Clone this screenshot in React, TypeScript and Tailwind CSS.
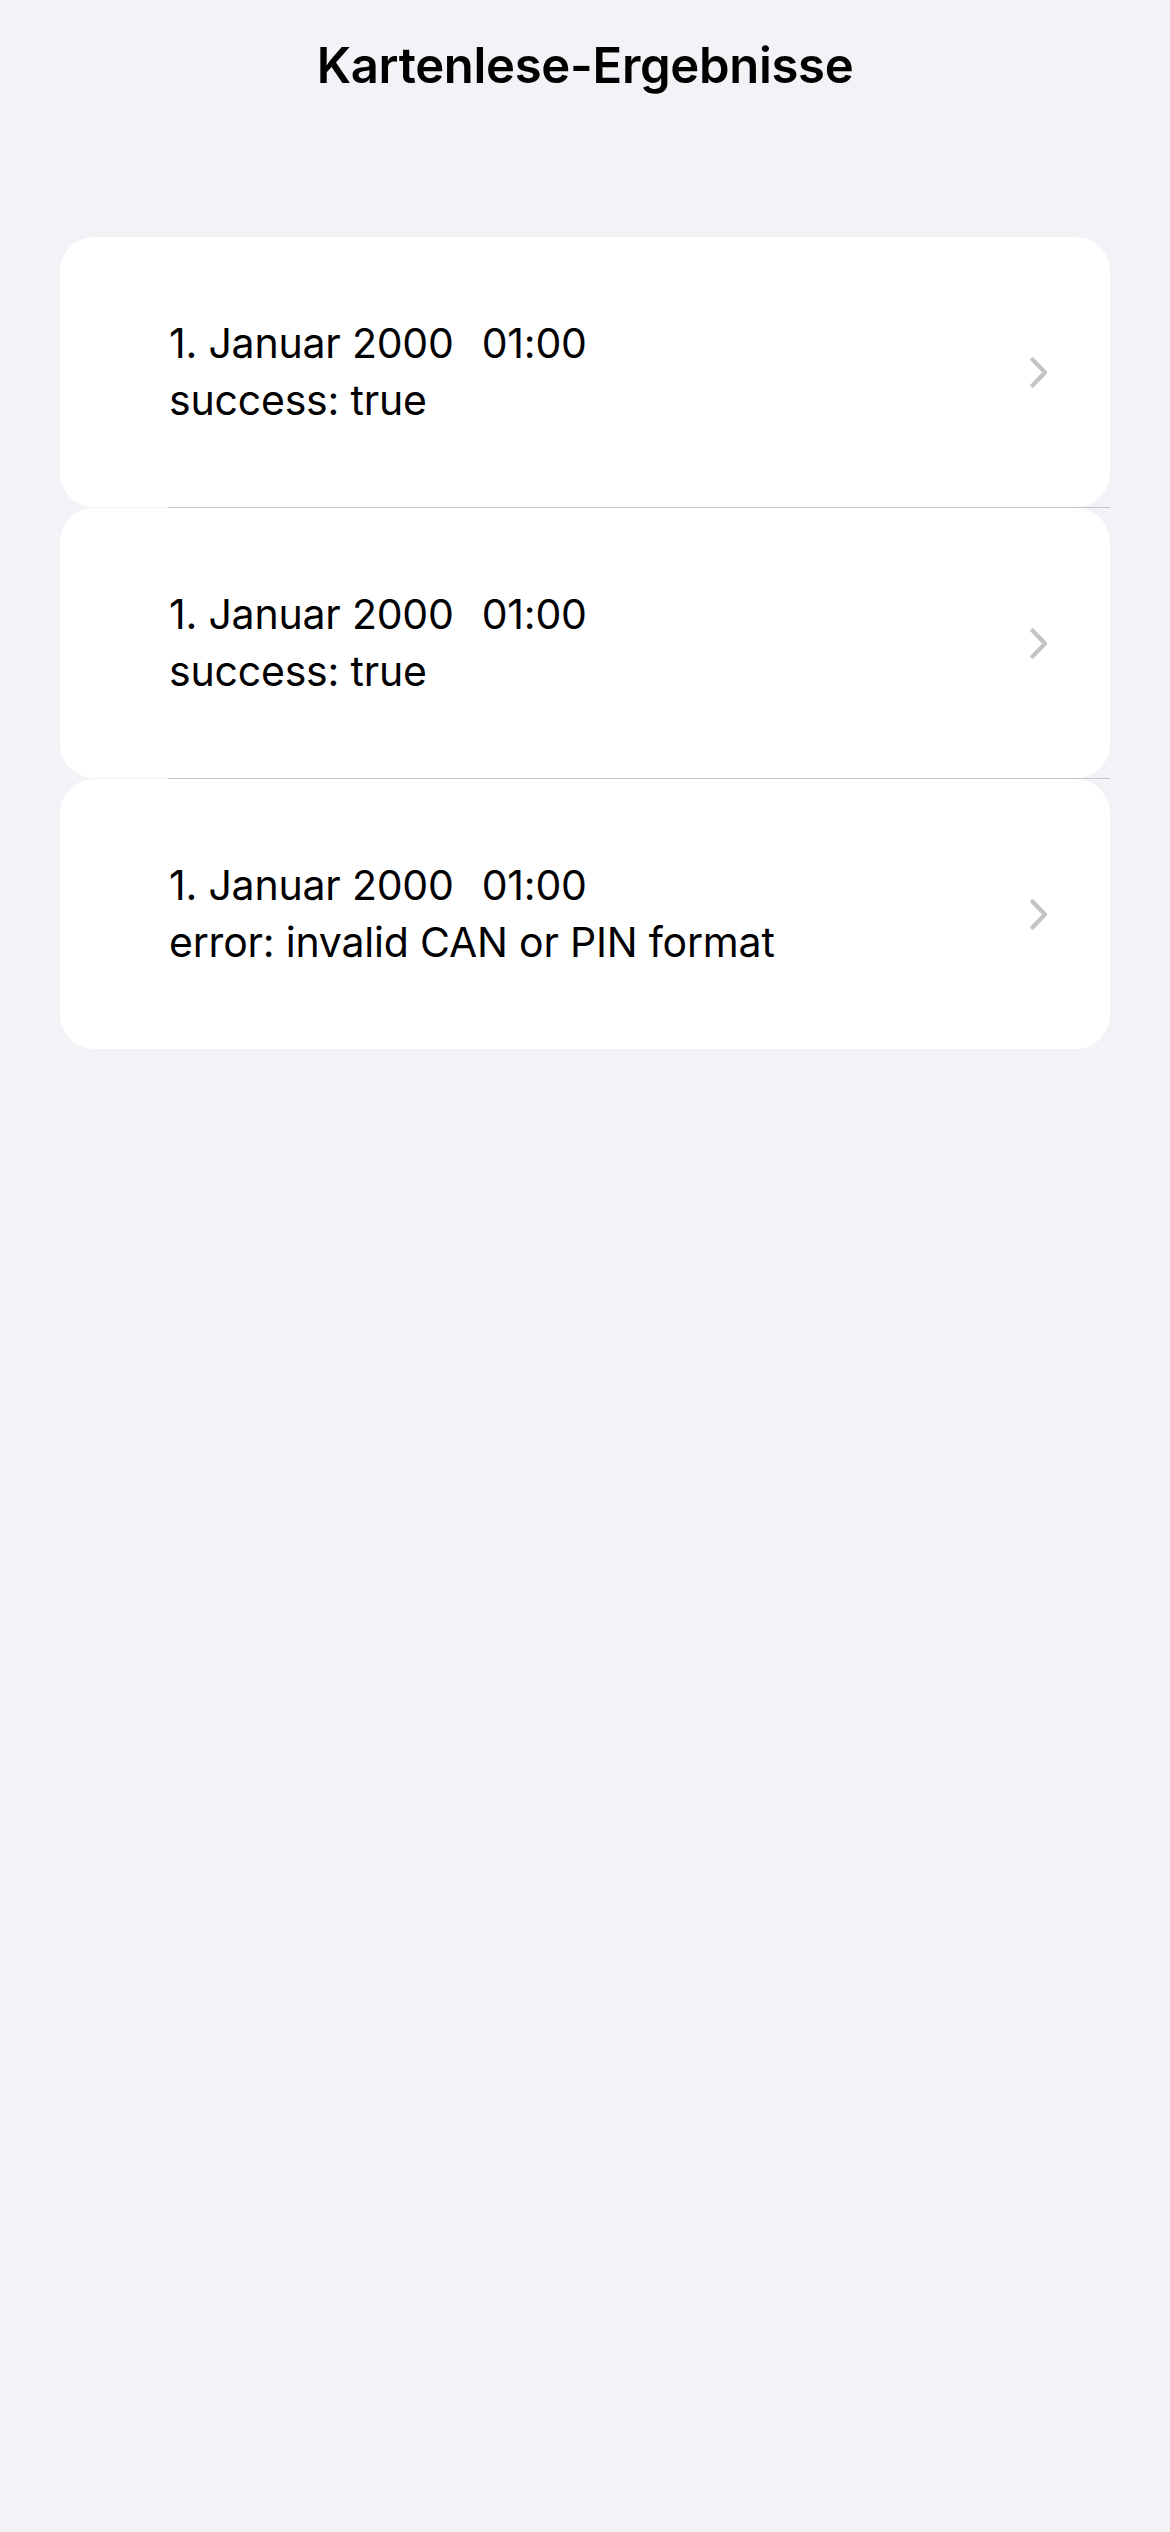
import React from 'react';

interface ReadResult {
  date: string;
  time: string;
  status: string;
}

const results: ReadResult[] = [
  { date: '1. Januar 2000', time: '01:00', status: 'success: true' },
  { date: '1. Januar 2000', time: '01:00', status: 'success: true' },
  { date: '1. Januar 2000', time: '01:00', status: 'error: invalid CAN or PIN format' },
];

const Chevron = () => (
  <svg width="18" height="31" viewBox="0 0 18 31" fill="none">
    <polyline
      points="2.5,2.5 15,15.5 2.5,28.5"
      stroke="#c4c4c7"
      strokeWidth="4.2"
      strokeLinecap="round"
      strokeLinejoin="round"
    />
  </svg>
);

const ResultRow: React.FC<{ item: ReadResult }> = ({ item }) => (
  <div className="flex h-[270px] items-center justify-between rounded-[34px] bg-white pl-[109px] pr-[62px]">
    <div className="text-[41px] leading-[57px] tracking-[-0.2px] text-black">
      <div>
        {item.date}
        <span className="ml-[28px]">{item.time}</span>
      </div>
      <div>{item.status}</div>
    </div>
    <Chevron />
  </div>
);

export default function App() {
  return (
    <div className="min-h-[2532px] w-full bg-[#f2f2f7] font-['Inter','Noto_Sans',sans-serif]">
      <div className="pt-[36px] text-center text-[49px] leading-[60px] font-semibold tracking-[-0.3px] text-black">
        Kartenlese-Ergebnisse
      </div>

      <div className="mx-[60px] mt-[141px] flex flex-col">
        {results.map((item, i) => (
          <React.Fragment key={i}>
            <ResultRow item={item} />
            {i < results.length - 1 && <div className="ml-[108px] h-px bg-[#c6c6c8]" />}
          </React.Fragment>
        ))}
      </div>
    </div>
  );
}
